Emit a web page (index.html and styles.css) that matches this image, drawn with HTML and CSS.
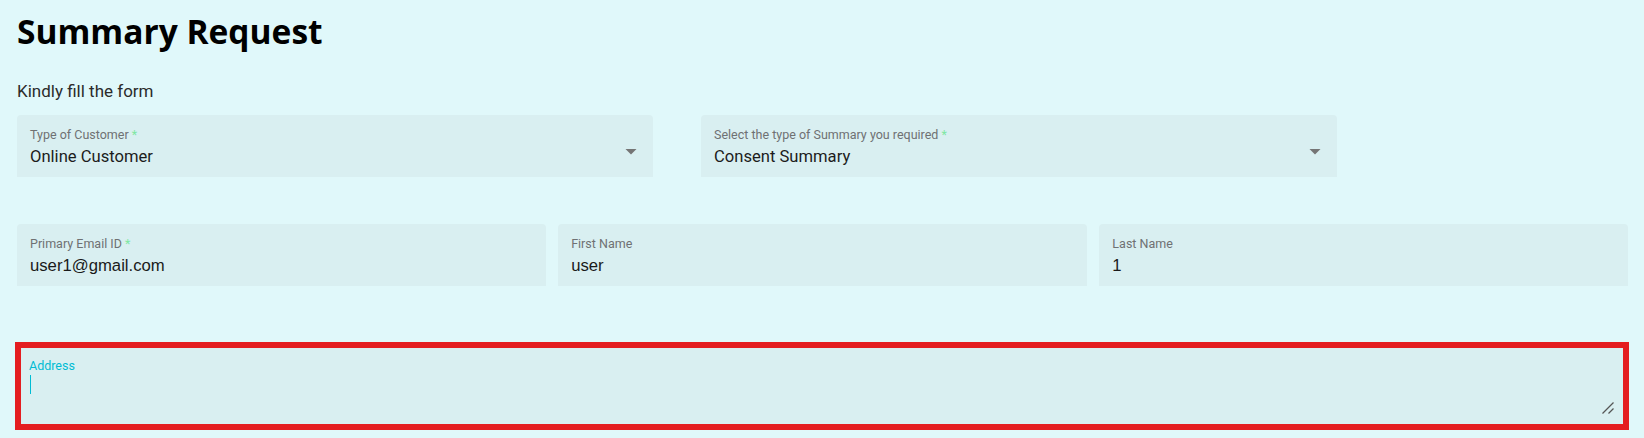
FILE: index.html
```html
<!DOCTYPE html>
<html lang="en">
<head>
    <meta charset="UTF-8">
    <meta name="viewport" content="width=device-width, initial-scale=1.0">
    <title>Summary Request</title>
    <link rel="stylesheet" href="styles.css">
</head>
<body>
    <h1>Summary Request</h1>
    <p class="intro">Kindly fill the form</p>

    <div class="row row-selects">
        <div class="field select">
            <div class="field-body">
                <label>Type of Customer <span class="req">*</span></label>
                <span class="value">Online Customer</span>
            </div>
            <svg class="arrow" width="12" height="6" viewBox="0 0 12 6"><polygon points="0.5,0 11.5,0 6,5.5" fill="#757575"/></svg>
        </div>
        <div class="field select">
            <div class="field-body">
                <label>Select the type of Summary you required <span class="req">*</span></label>
                <span class="value">Consent Summary</span>
            </div>
            <svg class="arrow" width="12" height="6" viewBox="0 0 12 6"><polygon points="0.5,0 11.5,0 6,5.5" fill="#757575"/></svg>
        </div>
    </div>

    <div class="row row-inputs">
        <div class="field">
            <div class="field-body">
                <label for="email">Primary Email ID <span class="req">*</span></label>
                <input id="email" type="text" value="user1@gmail.com">
            </div>
        </div>
        <div class="field">
            <div class="field-body">
                <label for="firstName">First Name</label>
                <input id="firstName" type="text" value="user">
            </div>
        </div>
        <div class="field">
            <div class="field-body">
                <label for="lastName">Last Name</label>
                <input id="lastName" type="text" value="1">
            </div>
        </div>
    </div>

    <div class="field area">
        <label for="address">Address</label>
        <div class="area-wrap">
            <textarea id="address"></textarea>
            <span class="caret"></span>
            <!-- resize grip -->
            <svg class="grip" width="12" height="12" viewBox="0 0 12 12">
                <path d="M0.5 11.5 L11.5 0.5 M6.5 11.5 L11.5 6.5" stroke="#555" stroke-width="1.3" fill="none"/>
            </svg>
        </div>
    </div>
</body>
</html>
```

FILE: styles.css
```css
:root {
    --page-bg: #e0f8fa;
    --field-bg: #d9eff1;
    --label-color: #6f7173;
    --text-color: #1c1c1c;
    --accent: #00bcd4;
    --req-color: #7fe7a3;
    --alert: #e41d20;
}
body {
    margin: 0;
    padding: 0 16px 0 17px;
    background-color: var(--page-bg);
    font-family: Roboto, "Liberation Sans", sans-serif;
    color: var(--text-color);
}
h1 {
    margin: 11px 0 0;
    font-family: "Open Sans", sans-serif;
    font-weight: 700;
    font-size: 33.5px;
    line-height: 40px;
    color: #000;
}
.intro {
    margin: 30px 0 14px;
    font-size: 17px;
    line-height: 20px;
    color: #2b2b2b;
}
.row {
    display: flex;
}
.row-selects {
    gap: 48px;
}
.row-selects .field {
    width: 636px;
}
.row-inputs {
    margin-top: 47px;
    gap: 12.5px;
}
.row-inputs .field {
    flex: 1;
}
.field {
    box-sizing: border-box;
    height: 62px;
    padding: 12px 16px 0 13px;
    background-color: var(--field-bg);
    border-radius: 4px 4px 0 0;
    display: flex;
    align-items: flex-start;
}
.field-body {
    flex: 1;
    display: flex;
    flex-direction: column;
    gap: 4px;
}
label {
    font-size: 12.5px;
    line-height: 15px;
    color: var(--label-color);
}
.req {
    color: var(--req-color);
}
.value {
    font-size: 16.6px;
    line-height: 21px;
    color: var(--text-color);
}
.select .arrow {
    align-self: center;
    margin-top: -1px;
}
input {
    border: none;
    outline: none;
    background: transparent;
    padding: 0;
    margin: 0;
    font-family: "Liberation Sans", Arial, sans-serif;
    font-size: 16.7px;
    line-height: 21px;
    height: 21px;
    color: #1a1a1a;
}
.area {
    display: block;
    height: 88px;
    margin: 56px -1px 0 -2px;
    padding: 10px 7px 8px 8px;
    border: 6px solid var(--alert);
    border-radius: 0;
}
.area label {
    display: block;
    color: var(--accent);
}
.area-wrap {
    position: relative;
    margin-top: 2px;
}
textarea {
    display: block;
    box-sizing: border-box;
    width: 100%;
    height: 41px;
    margin: 0;
    padding: 0;
    border: none;
    outline: none;
    background: transparent;
    font-family: "Liberation Sans", Arial, sans-serif;
    font-size: 16px;
    line-height: 19px;
    resize: none;
}
.caret {
    position: absolute;
    left: 1px;
    top: 0;
    width: 1px;
    height: 19px;
    background-color: var(--accent);
}
.grip {
    position: absolute;
    right: 2px;
    bottom: 2px;
}
```
